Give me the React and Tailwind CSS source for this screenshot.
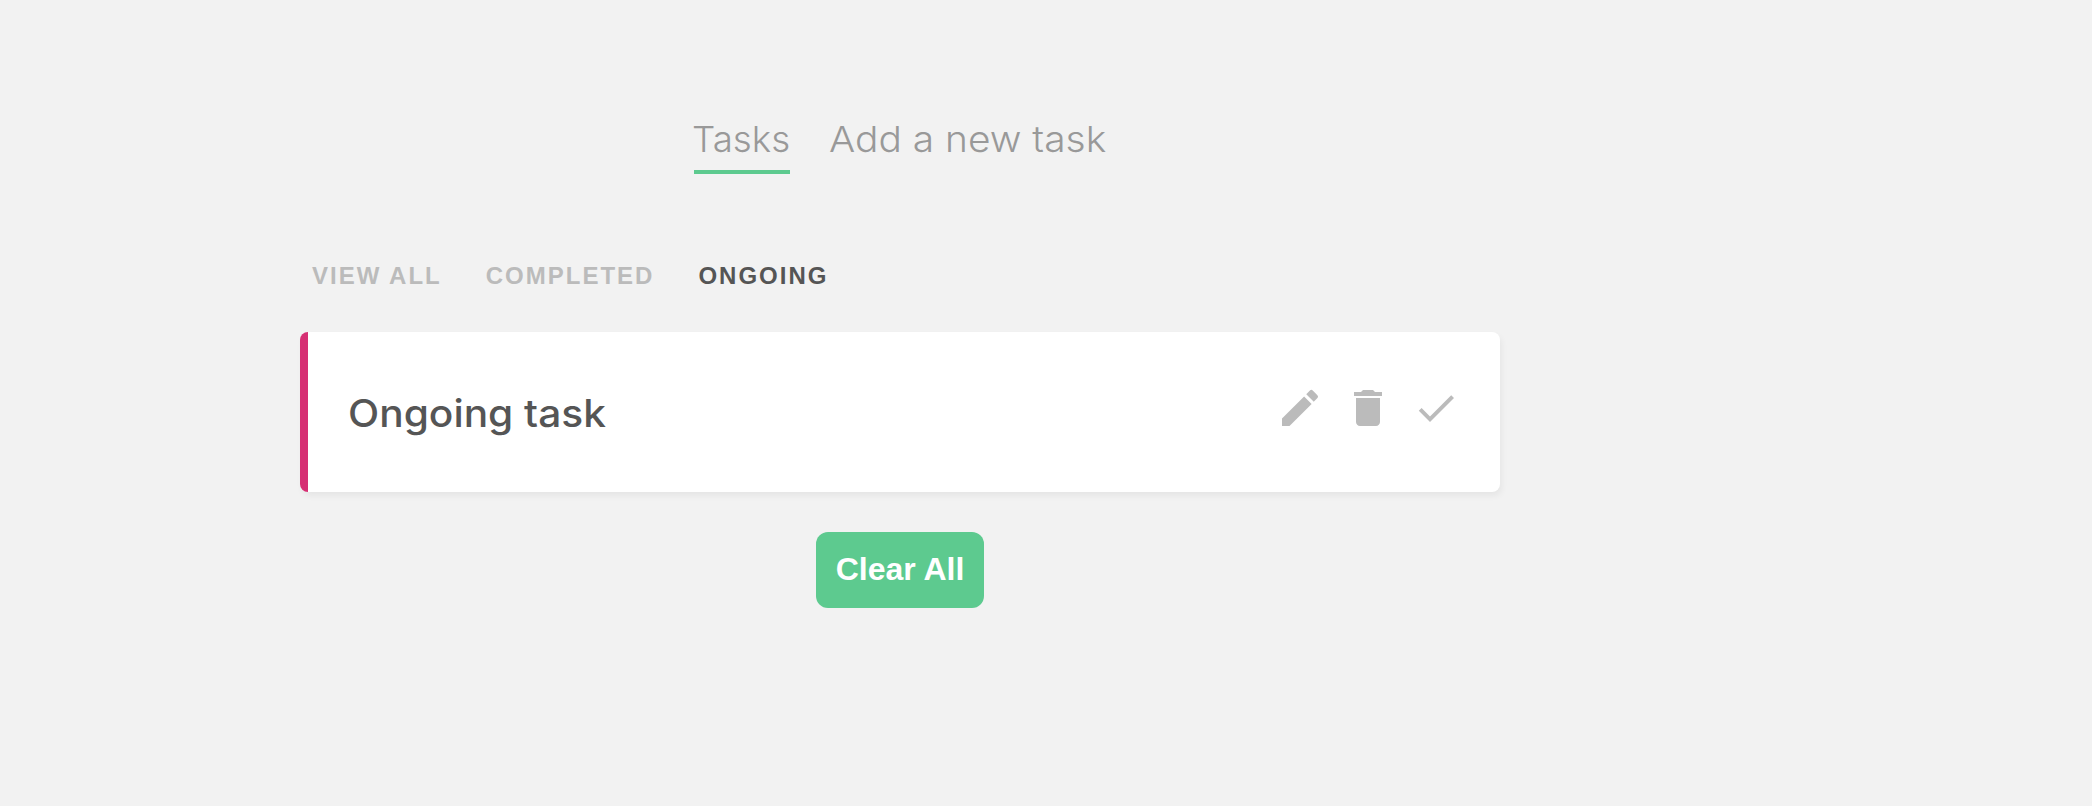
const ICONS = {
  edit: 'M3 17.25V21h3.75L17.81 9.94l-3.75-3.75L3 17.25zM20.71 7.04a.996.996 0 0 0 0-1.41l-2.34-2.34a.996.996 0 0 0-1.41 0l-1.83 1.83 3.75 3.75 1.83-1.83z',
  remove: 'M6 19c0 1.1.9 2 2 2h8c1.1 0 2-.9 2-2V7H6v12zM19 4h-3.5l-1-1h-5l-1 1H5v2h14V4z',
  done: 'M9 16.2L4.8 12l-1.4 1.4L9 19 21 7l-1.4-1.4L9 16.2z',
};

function IconButton({ name }) {
  return (
    <button aria-label={name} className="size-12">
      <svg viewBox="0 0 24 24" className="size-12 fill-[#bbbbbb]">
        <path d={ICONS[name]} />
      </svg>
    </button>
  );
}

export default function App() {
  return (
    <div className="h-[806px] overflow-hidden bg-[#f2f2f2] font-['Liberation_Sans',Arial,sans-serif] text-[#555555]">
      <div className="ml-[300px] flex w-[1200px] flex-col pt-[115px]">
        <nav className="flex justify-center gap-10 font-[Inter,sans-serif] text-[36px] leading-[48px] font-light text-[#999999]">
          <a className="h-[59px] w-24 border-b-4 border-[#5dca8f] whitespace-nowrap">
            <span className="-ml-[2px] inline-block origin-left scale-x-[1.02]">Tasks</span>
          </a>
          <a className="w-[276px] whitespace-nowrap">
            <span className="-ml-px inline-block origin-left scale-x-[1.08]">Add a new task</span>
          </a>
        </nav>

        <div className="mt-[85px] flex h-[34px] gap-[44px] pl-3 text-[24px] leading-[34px] font-bold tracking-[2px] text-[#bbbbbb]">
          <button>VIEW ALL</button>
          <button>COMPLETED</button>
          <button className="text-[#555555]">ONGOING</button>
        </div>

        <div className="mt-[39px] flex h-40 justify-between rounded-[8px] border-l-8 border-[#d62f73] bg-white pr-10 pl-10 shadow-[2px_4px_6px_rgba(0,0,0,0.05)]">
          <h3 className="origin-left scale-x-[1.07] pt-[57px] font-[Inter,sans-serif] text-[38px] leading-[48px] font-medium whitespace-nowrap">Ongoing task</h3>
          <div className="flex gap-5 pt-[52px]">
            <IconButton name="edit" />
            <IconButton name="remove" />
            <IconButton name="done" />
          </div>
        </div>

        <button className="mt-10 h-[76px] w-[168px] self-center rounded-[12px] bg-[#5dca8f] pb-0.5 text-[32px] font-bold whitespace-nowrap text-white">
          Clear All
        </button>
      </div>
    </div>
  );
}
